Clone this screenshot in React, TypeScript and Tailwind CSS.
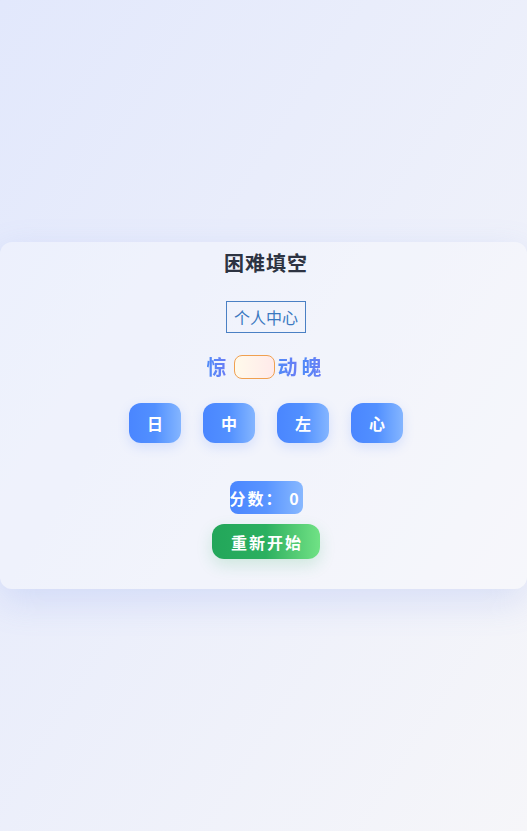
import React, { useState } from "react";

const letters = ["日", "中", "左", "心"];

export default function App() {
  const [score] = useState(0);

  return (
    <div
      className="flex min-h-[831px] w-full items-center bg-gradient-to-br from-[#e2e8fc] to-[#f6f6f9]"
      style={{ fontFamily: '"Noto Sans CJK SC", "Noto Sans", sans-serif' }}
    >
      <div className="flex w-full flex-col items-center rounded-xl bg-white/30 pb-[30px] pl-[5px] pt-[7px] shadow-[0_12px_36px_rgba(110,140,235,0.2)]">
        <h2 className="text-[20px] font-bold leading-[28px] tracking-[1px] text-[#2d3342]">
          困难填空
        </h2>

        <div className="mt-[24px] border border-[#4a80c4] px-[7px] text-[16px] leading-[30px] text-[#3a78c0]">
          个人中心
        </div>

        <div className="mr-[4px] mt-[20px] flex h-[28px] items-center text-[20px] font-bold leading-[28px]">
          <span className="bg-gradient-to-r from-[#4d8af8] to-[#6b7df5] bg-clip-text text-transparent">
            惊
          </span>
          <div className="ml-[7px] mr-[3px] h-[24px] w-[41px] rounded-lg border border-[#f0a050] bg-gradient-to-r from-[#fffaeb] to-[#ffeaea]" />
          <span className="bg-gradient-to-r from-[#4d8af8] to-[#6b7df5] bg-clip-text text-transparent">
            动
          </span>
          <span className="ml-[4px] bg-gradient-to-r from-[#4d8af8] to-[#6b7df5] bg-clip-text text-transparent">
            魄
          </span>
        </div>

        <div className="mt-[22px] flex gap-[22px]">
          {letters.map((l) => (
            <button
              key={l}
              type="button"
              className="flex h-[40px] w-[52px] items-center justify-center rounded-xl bg-gradient-to-r from-[#4a86ff] via-[#5290ff] to-[#84b5ff] text-[16px] font-bold text-white shadow-[0_4px_12px_rgba(80,130,255,0.18)]"
            >
              {l}
            </button>
          ))}
        </div>

        <div className="mt-[38px] flex h-[33px] w-[73px] items-center justify-start whitespace-pre rounded-lg bg-gradient-to-r from-[#4a86ff] via-[#5a95ff] to-[#88b8ff] text-[16px] font-bold tracking-[2px] text-white">
          {`分数： ${score}`}
        </div>

        <button
          type="button"
          className="mt-[10px] flex h-[35px] w-[108px] items-center justify-center rounded-xl bg-gradient-to-r from-[#22a65a] via-[#2bb060] to-[#70e285] pl-[2px] text-[16px] font-bold tracking-[2px] text-white shadow-[0_6px_16px_rgba(40,170,90,0.18)]"
        >
          重新开始
        </button>
      </div>
    </div>
  );
}
